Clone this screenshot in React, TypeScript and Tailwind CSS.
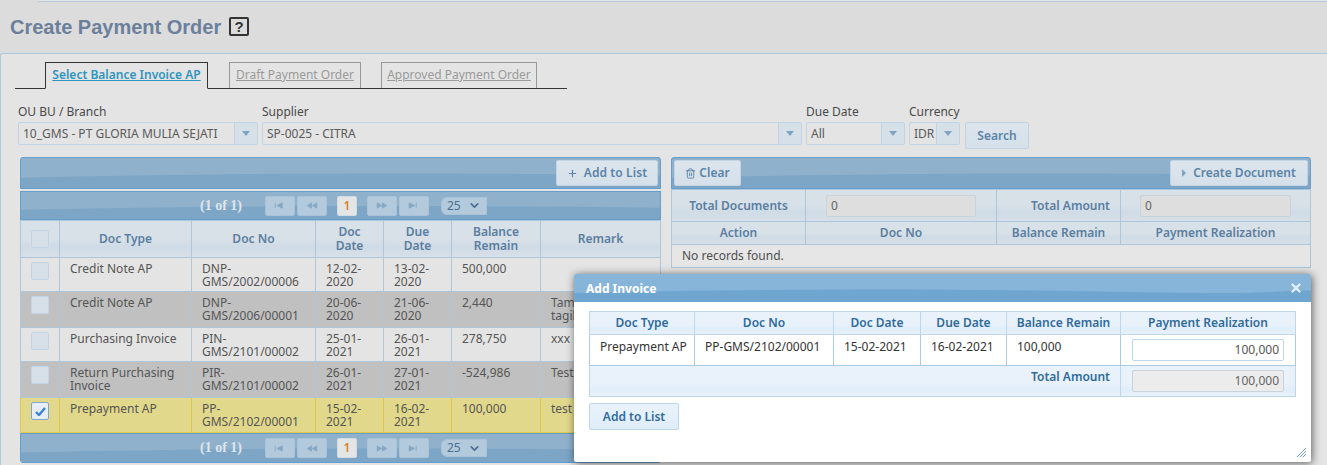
import { ChevronDown, Plus, Trash2, X } from "lucide-react";
import type { ReactNode } from "react";

const body = "font-['Noto_Sans',sans-serif] text-[12px] leading-[14px]";
const headCell =
  "border border-[#aec6da] bg-[linear-gradient(#d8e0e8_0%,#d8e0e8_50%,#cfdbe6_70%,#d8e0e8_100%)] font-semibold text-[#5a7ea0] text-center";
const softBtn =
  "rounded-[2px] border border-[#c2d4e3] bg-[linear-gradient(#dde5ec,#d5e0ea)] text-[#5a83a8] font-semibold";

const rows = [
  { type: "Credit Note AP", no: "DNP-GMS/2002/00006", doc: "12-02-2020", due: "13-02-2020", bal: "500,000", remark: "", tone: "bg-[#e4e4e4]", h: "h-[34px]" },
  { type: "Credit Note AP", no: "DNP-GMS/2006/00001", doc: "20-06-2020", due: "21-06-2020", bal: "2,440", remark: "Tambahan tagihan", tone: "bg-[#c0c0c0]", h: "h-[36px]" },
  { type: "Purchasing Invoice", no: "PIN-GMS/2101/00002", doc: "25-01-2021", due: "26-01-2021", bal: "278,750", remark: "xxx", tone: "bg-[#e4e4e4]", h: "h-[34px]" },
  { type: "Return Purchasing Invoice", no: "PIR-GMS/2101/00002", doc: "26-01-2021", due: "27-01-2021", bal: "-524,986", remark: "Test", tone: "bg-[#c0c0c0]", h: "h-[36px]" },
  { type: "Prepayment AP", no: "PP-GMS/2102/00001", doc: "15-02-2021", due: "16-02-2021", bal: "100,000", remark: "test", tone: "bg-[#e2d88b]", h: "h-[35px]", picked: true },
];

function Bar({ children, className = "" }: { children: ReactNode; className?: string }) {
  return (
    <div className={`relative flex items-center overflow-hidden border border-[#659dcc] bg-[#8fb1cc] ${className}`}>
      <svg className="absolute inset-0 h-full w-full" viewBox="0 0 100 100" preserveAspectRatio="none">
        <path d="M0 66C30 52 60 46 100 58V100H0Z" fill="#7ca5c6" />
      </svg>
      {children}
    </div>
  );
}

function Combo({ label, value, width, arrow = "w-[23px]" }: { label: string; value: string; width: string; arrow?: string }) {
  return (
    <div className={`flex flex-col ${width}`}>
      <label className="mb-[3px] text-[#4a4a4a]">{label}</label>
      <div className="flex h-[23px] rounded-[2px] border border-[#c2d4e3] bg-[#e4e4e4]">
        <span className="flex-1 truncate pl-[4px] leading-[21px] text-[#5a5a5a]">{value}</span>
        <span className={`flex items-center justify-center border-l border-[#c2d4e3] bg-[#d6e0e9] ${arrow}`}>
          <span className="h-0 w-0 border-x-[4px] border-t-[5px] border-x-transparent border-t-[#7fa3c2]" />
        </span>
      </div>
    </div>
  );
}

function PagerIcon({ kind }: { kind: "first" | "prev" | "next" | "last" }) {
  const paths = {
    first: "M1 1v6 M9 1v6L3 4z",
    prev: "M6 1v6L1 4z M12 1v6L7 4z",
    next: "M1 1v6l5-3z M7 1v6l5-3z",
    last: "M1 1v6l6-3z M9 1v6",
  };
  return (
    <svg width="12" height="7" viewBox="0 0 13 8" fill="#86a8c5" stroke="#86a8c5" strokeWidth="1">
      <path d={paths[kind]} />
    </svg>
  );
}

function Pager({ className }: { className: string }) {
  const btn = "relative flex h-[20px] w-[30px] items-center justify-center rounded-[2px] border border-[#a9c3d9] bg-[#b3c9dc]";
  return (
    <Bar className={className}>
      <span className="relative ml-[179px] w-[65px] font-['Liberation_Serif',serif] text-[14px] font-bold text-[#dbe6ef]">(1 of 1)</span>
      <button className={btn}><PagerIcon kind="first" /></button>
      <button className={`${btn} ml-[2px]`}><PagerIcon kind="prev" /></button>
      <span className="relative ml-[10px] flex h-[20px] w-[20px] items-center justify-center rounded-[2px] border border-[#d2dbe3] bg-[#e4e6e6] font-semibold text-[#d9822b]">1</span>
      <button className={`${btn} ml-[10px]`}><PagerIcon kind="next" /></button>
      <button className={`${btn} ml-[2px]`}><PagerIcon kind="last" /></button>
      <span className="relative ml-[12px] flex h-[18px] w-[46px] items-center justify-between rounded-l-[6px] border border-[#a9c3d9] bg-[#b3c9dc] px-[5px] text-[#4a6f90]">
        25
        <ChevronDown size={13} strokeWidth={3} className="text-[#4a6f90]" />
      </span>
    </Bar>
  );
}

function Check({ on }: { on?: boolean }) {
  return (
    <span className={`flex h-[18px] w-[18px] items-center justify-center rounded-[2px] border ${on ? "border-[#7fa7cc] bg-[#e6edf4]" : "border-[#c2d4e3] bg-[#d7e0e8]"}`}>
      {on && (
        <svg width="11" height="9" viewBox="0 0 11 9" fill="none" stroke="#3f83d6" strokeWidth="2.4">
          <path d="M1 5l3 3 6-7" />
        </svg>
      )}
    </span>
  );
}

function Th({ children, className = "" }: { children?: ReactNode; className?: string }) {
  return <th className={`${headCell} ${className}`}>{children}</th>;
}

function LeftTable() {
  return (
    <table className="w-[641px] table-fixed border-collapse">
      <colgroup>
        <col className="w-[39px]" />
        <col className="w-[132px]" />
        <col className="w-[124px]" />
        <col className="w-[68px]" />
        <col className="w-[68px]" />
        <col className="w-[89px]" />
        <col />
      </colgroup>
      <thead>
        <tr className="h-[37px]">
          <Th><span className="flex justify-center"><Check /></span></Th>
          <Th>Doc Type</Th>
          <Th>Doc No</Th>
          <Th>Doc<br />Date</Th>
          <Th>Due<br />Date</Th>
          <Th>Balance<br />Remain</Th>
          <Th>Remark</Th>
        </tr>
      </thead>
      <tbody>
        {rows.map((r) => {
          const line = r.picked ? "border-[#e0c64a]" : "border-[#aec6da]";
          const cell = `border ${line} px-[10px] pt-[4px] align-top leading-[13px] text-[#555]`;
          return (
            <tr key={r.no} className={`${r.tone} ${r.h}`}>
              <td className={`border ${line} pt-[4px] align-top`}>
                <span className="flex justify-center"><Check on={r.picked} /></span>
              </td>
              <td className={cell}>{r.type}</td>
              <td className={cell}>{r.no}</td>
              <td className={cell}>{r.doc}</td>
              <td className={cell}>{r.due}</td>
              <td className={cell}>{r.bal}</td>
              <td className={cell}>{r.remark}</td>
            </tr>
          );
        })}
      </tbody>
    </table>
  );
}

function ReadOnly({ value, className = "" }: { value: string; className?: string }) {
  return (
    <div className={`h-[22px] rounded-[2px] border border-[#c9d3dc] bg-[#dedede] px-[4px] text-left font-normal leading-[20px] text-[#666] ${className}`}>
      {value}
    </div>
  );
}

function RightTable() {
  return (
    <table className="w-[640px] table-fixed border-collapse">
      <colgroup>
        <col className="w-[134px]" />
        <col className="w-[191px]" />
        <col className="w-[124px]" />
        <col />
      </colgroup>
      <tbody>
        <tr className="h-[32px]">
          <Th>Total Documents</Th>
          <Th className="px-[20px]"><ReadOnly value="0" /></Th>
          <Th className="pr-[10px] text-right">Total Amount</Th>
          <Th className="pl-[19px] pr-[19px]"><ReadOnly value="0" /></Th>
        </tr>
        <tr className="h-[23px]">
          <Th>Action</Th>
          <Th>Doc No</Th>
          <Th>Balance Remain</Th>
          <Th>Payment Realization</Th>
        </tr>
        <tr className="h-[23px] bg-[#e6e6e6]">
          <td colSpan={4} className="border border-[#aec6da] px-[10px] text-[#4e4e4e]">No records found.</td>
        </tr>
      </tbody>
    </table>
  );
}

function AddInvoiceDialog() {
  const th = "border border-[#bcd6ea] bg-[linear-gradient(#e9f2fb_0%,#e9f2fb_55%,#dfedf9_75%,#e9f2fb_100%)] font-semibold text-[#2f6b9c] text-center";
  const td = "whitespace-nowrap border border-[#a9cbe4] px-[10px] pt-[5px] align-top text-[#333]";
  return (
    <div className="absolute left-[574px] top-[274px] h-[188px] w-[737px] rounded-[2px] bg-white shadow-[1px_1px_8px_rgba(0,0,0,0.6)]">
      <div className="relative flex h-[28px] items-center justify-between overflow-hidden rounded-t-[2px] bg-[#87b5da] pl-[12px] pr-[8px] font-bold text-white">
        <svg className="absolute inset-0 h-full w-full" viewBox="0 0 100 100" preserveAspectRatio="none">
          <path d="M0 68C20 56 45 50 70 62S90 66 100 58V100H0Z" fill="#6fa6d0" />
        </svg>
        <span className="relative pt-[2px]">Add Invoice</span>
        <X size={14} strokeWidth={4} className="relative text-[#e6eff7]" />
      </div>
      <div className="px-[15px] pt-[9px]">
        <table className="w-[707px] table-fixed border-collapse">
          <colgroup>
            <col className="w-[105px]" />
            <col className="w-[139px]" />
            <col className="w-[87px]" />
            <col className="w-[86px]" />
            <col className="w-[114px]" />
            <col />
          </colgroup>
          <thead>
            <tr className="h-[23px]">
              <th className={th}>Doc Type</th>
              <th className={th}>Doc No</th>
              <th className={th}>Doc Date</th>
              <th className={th}>Due Date</th>
              <th className={th}>Balance Remain</th>
              <th className={th}>Payment Realization</th>
            </tr>
          </thead>
          <tbody>
            <tr className="h-[31px]">
              <td className={td}>Prepayment AP</td>
              <td className={td}>PP-GMS/2102/00001</td>
              <td className={td}>15-02-2021</td>
              <td className={td}>16-02-2021</td>
              <td className={td}>100,000</td>
              <td className="border border-[#a9cbe4] px-[11px]">
                <div className="h-[22px] rounded-[2px] border border-[#bcd6ea] bg-white px-[4px] text-right leading-[20px] text-[#555]">100,000</div>
              </td>
            </tr>
            <tr className="h-[31px]">
              <td colSpan={5} className={`${th} pr-[10px] pt-[4px] !text-right align-top`}>Total Amount</td>
              <td className={`${th} px-[11px]`}>
                <ReadOnly value="100,000" className="!bg-[#ececec] !text-right" />
              </td>
            </tr>
          </tbody>
        </table>
        <button className="mt-[6px] h-[27px] w-[90px] rounded-[2px] border border-[#bcd6ea] bg-[linear-gradient(#e9f2fb,#dfedf9)] font-semibold text-[#2f6b9c]">
          Add to List
        </button>
      </div>
      <svg className="absolute bottom-[5px] right-[5px]" width="9" height="9" viewBox="0 0 9 9" stroke="#6f9cc0" strokeWidth="1">
        <path d="M0 9L9 0 M3 9L9 3 M6 9L9 6" />
      </svg>
    </div>
  );
}

export default function App() {
  return (
    <div className={`relative h-[465px] w-[1327px] overflow-hidden bg-[#dcdcdc] ${body}`}>
      <div className="ml-[38px] h-[2px] border-b border-[#b4cadc] bg-[#e4e4e4]" />
      <h1 className="flex h-[51px] items-center pb-[2px] pl-[10px] font-['Liberation_Sans',sans-serif] text-[20px] font-bold leading-none text-[#6c809c]">
        Create Payment Order
        <span className="ml-[8px] flex h-[19px] w-[20px] items-center justify-center rounded-[2px] border-2 border-[#333] text-[15px] text-[#333]">?</span>
      </h1>
      <main className="h-[412px] rounded-tl-[3px] border-l border-t border-[#aec8dc] bg-[#e4e4e4]">
        <nav className="ml-[14px] mt-[8px] flex h-[27px] w-[552px] items-end border-b border-[#333] pl-[30px]">
          <a className="-mb-px flex h-[27px] w-[163px] items-center justify-center border border-b-[#e4e4e4] border-[#333] pb-[2px] font-semibold text-[#2e94c0] underline">Select Balance Invoice AP</a>
          <a className="ml-[21px] flex h-[26px] w-[132px] items-center justify-center border border-b-0 border-[#999] pb-[1px] text-[#9a9a9a] underline">Draft Payment Order</a>
          <a className="ml-[20px] flex h-[26px] w-[156px] items-center justify-center border border-b-0 border-[#999] pb-[1px] text-[#9a9a9a] underline">Approved Payment Order</a>
        </nav>
        <section className="ml-[17px] mt-[16px] flex items-start gap-[4px]">
          <Combo label="OU BU / Branch" value="10_GMS - PT GLORIA MULIA SEJATI" width="w-[240px]" />
          <Combo label="Supplier" value="SP-0025 - CITRA" width="w-[540px]" />
          <Combo label="Due Date" value="All" width="w-[99px]" />
          <Combo label="Currency" value="IDR" width="w-[51px]" />
          <button className={`ml-[1px] mt-[17px] h-[27px] w-[64px] ${softBtn}`}>Search</button>
        </section>
        <div className="mt-[8px] flex items-start pl-[19px]">
          <div className="w-[641px]">
            <Bar className="h-[32px] justify-end rounded-t-[3px] pr-[2px]">
              <button className={`relative flex h-[26px] w-[102px] items-center justify-center gap-[6px] tracking-[0.1px] ${softBtn}`}>
                <Plus size={11} strokeWidth={2.5} /> Add to List
              </button>
            </Bar>
            <Pager className="mt-[2px] h-[29px]" />
            <LeftTable />
            <Pager className="h-[30px] rounded-b-[3px]" />
          </div>
          <div className="ml-[10px] w-[640px]">
            <Bar className="h-[32px] justify-between rounded-t-[3px] px-[2px]">
              <button className={`relative flex h-[26px] w-[67px] items-center justify-center gap-[3px] ${softBtn}`}>
                <Trash2 size={11} /> Clear
              </button>
              <button className={`relative flex h-[26px] w-[138px] items-center justify-center gap-[7px] ${softBtn}`}>
                <span className="h-0 w-0 border-y-[4px] border-l-[4px] border-y-transparent border-l-[#7fa3c2]" />
                Create Document
              </button>
            </Bar>
            <RightTable />
          </div>
        </div>
      </main>
      <AddInvoiceDialog />
    </div>
  );
}
